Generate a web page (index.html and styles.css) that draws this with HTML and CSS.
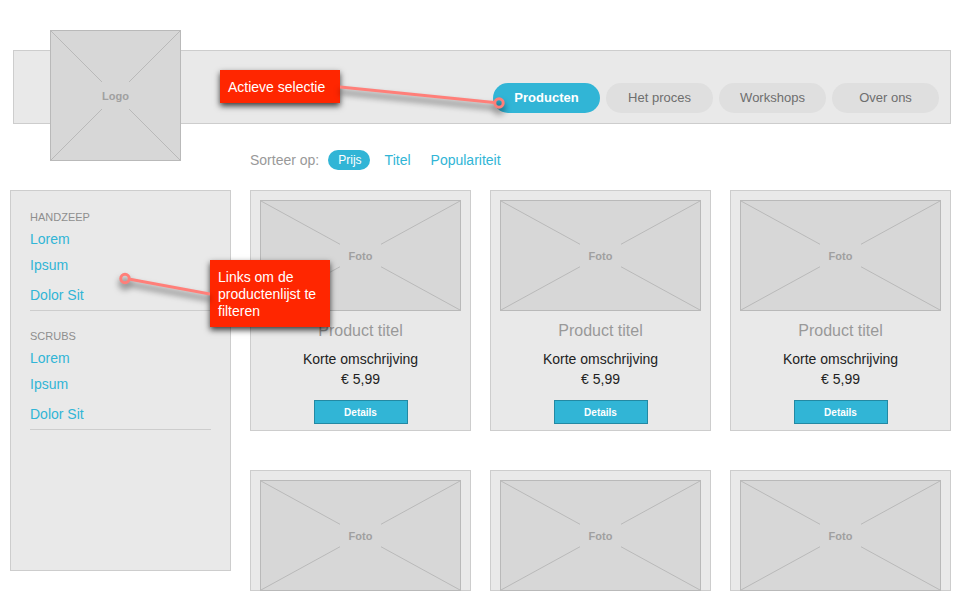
FILE: index.html
```html
<!DOCTYPE html>
<html lang="nl">
<head>
<meta charset="utf-8">
<meta name="viewport" content="width=device-width, initial-scale=1">
<title>Producten</title>
<link rel="stylesheet" href="styles.css">
</head>
<body>
<header class="header">
  <div class="placeholder logo">
    <svg class="cross" viewBox="0 0 100 100" preserveAspectRatio="none" aria-hidden="true"><path d="M0 0L100 100M100 0L0 100"/></svg>
    <span class="placeholder-label">Logo</span>
  </div>
  <nav class="nav">
    <a class="nav-link active" href="#">Producten</a>
    <a class="nav-link" href="#">Het proces</a>
    <a class="nav-link" href="#">Workshops</a>
    <a class="nav-link" href="#">Over ons</a>
  </nav>
</header>

<div class="sort">
  <span class="sort-label">Sorteer op:</span>
  <a class="sort-link active" href="#">Prijs</a>
  <a class="sort-link" href="#">Titel</a>
  <a class="sort-link" href="#">Populariteit</a>
</div>

<div class="layout">
  <aside class="sidebar">
    <section class="filter">
      <h2 class="filter-title">HANDZEEP</h2>
      <a class="filter-link" href="#">Lorem</a>
      <a class="filter-link" href="#">Ipsum</a>
      <a class="filter-link last" href="#">Dolor Sit</a>
    </section>
    <section class="filter">
      <h2 class="filter-title">SCRUBS</h2>
      <a class="filter-link" href="#">Lorem</a>
      <a class="filter-link" href="#">Ipsum</a>
      <a class="filter-link last" href="#">Dolor Sit</a>
    </section>
  </aside>

  <main class="products">
    <article class="card">
      <div class="placeholder photo">
        <svg class="cross" viewBox="0 0 100 100" preserveAspectRatio="none" aria-hidden="true"><path d="M0 0L100 100M100 0L0 100"/></svg>
        <span class="placeholder-label">Foto</span>
      </div>
      <h3 class="card-title">Product titel</h3>
      <p class="card-text">Korte omschrijving</p>
      <p class="card-text">€ 5,99</p>
      <button class="details" type="button">Details</button>
    </article>
    <article class="card">
      <div class="placeholder photo">
        <svg class="cross" viewBox="0 0 100 100" preserveAspectRatio="none" aria-hidden="true"><path d="M0 0L100 100M100 0L0 100"/></svg>
        <span class="placeholder-label">Foto</span>
      </div>
      <h3 class="card-title">Product titel</h3>
      <p class="card-text">Korte omschrijving</p>
      <p class="card-text">€ 5,99</p>
      <button class="details" type="button">Details</button>
    </article>
    <article class="card">
      <div class="placeholder photo">
        <svg class="cross" viewBox="0 0 100 100" preserveAspectRatio="none" aria-hidden="true"><path d="M0 0L100 100M100 0L0 100"/></svg>
        <span class="placeholder-label">Foto</span>
      </div>
      <h3 class="card-title">Product titel</h3>
      <p class="card-text">Korte omschrijving</p>
      <p class="card-text">€ 5,99</p>
      <button class="details" type="button">Details</button>
    </article>
    <article class="card card-cut">
      <div class="placeholder photo">
        <svg class="cross" viewBox="0 0 100 100" preserveAspectRatio="none" aria-hidden="true"><path d="M0 0L100 100M100 0L0 100"/></svg>
        <span class="placeholder-label">Foto</span>
      </div>
    </article>
    <article class="card card-cut">
      <div class="placeholder photo">
        <svg class="cross" viewBox="0 0 100 100" preserveAspectRatio="none" aria-hidden="true"><path d="M0 0L100 100M100 0L0 100"/></svg>
        <span class="placeholder-label">Foto</span>
      </div>
    </article>
    <article class="card card-cut">
      <div class="placeholder photo">
        <svg class="cross" viewBox="0 0 100 100" preserveAspectRatio="none" aria-hidden="true"><path d="M0 0L100 100M100 0L0 100"/></svg>
        <span class="placeholder-label">Foto</span>
      </div>
    </article>
  </main>
</div>

<div class="note note-nav">Actieve selectie</div>
<svg class="pointer pointer-nav" width="180" height="40" viewBox="0 0 180 40" aria-hidden="true"><path d="M0 7L154 22.5"/><circle cx="159" cy="23" r="4.2"/></svg>
<div class="note note-filter">Links om de productenlijst te filteren</div>
<svg class="pointer pointer-filter" width="100" height="50" viewBox="0 0 100 50" aria-hidden="true"><path d="M20 19.3L100 34"/><circle cx="15" cy="18.5" r="4.2"/></svg>
</body>
</html>
```

FILE: styles.css
```css
* {
  box-sizing: border-box;
}

body {
  position: relative;
  margin: 0;
  padding: 50px 9px 0 10px;
  background: #fff;
  font-family: "Liberation Sans", Arial, Helvetica, sans-serif;
  font-size: 14px;
  line-height: 20px;
  color: #222;
}

a {
  color: #31b5d6;
  text-decoration: none;
}

h2, h3, p {
  margin: 0;
  font-weight: normal;
}

.header {
  position: relative;
  margin-left: 3px;
  padding: 32px 11px 10px;
  background: #e9e9e9;
  border: 1px solid #cdcdcd;
}

.placeholder {
  display: flex;
  align-items: center;
  justify-content: center;
  background: #d7d7d7;
  border: 1px solid #b9b9b9;
}

.cross {
  position: absolute;
  inset: 0;
  width: 100%;
  height: 100%;
}

.cross path {
  fill: none;
  stroke: #b9b9b9;
  stroke-width: 1px;
  vector-effect: non-scaling-stroke;
}

.placeholder-label {
  position: relative;
  padding: 0 9px;
  background: #d7d7d7;
  font-size: 11px;
  font-weight: bold;
  line-height: 24px;
  color: #a0a0a0;
}

.logo {
  position: absolute;
  top: -21px;
  left: 36px;
  width: 131px;
  height: 131px;
}

.logo .placeholder-label {
  padding: 0;
  line-height: 28px;
}

.nav {
  display: flex;
  justify-content: flex-end;
  gap: 6px;
}

.nav-link {
  width: 107px;
  border-radius: 15px;
  background: #dfdfdf;
  font-size: 13px;
  line-height: 30px;
  text-align: center;
  color: #6e6e6e;
}

.nav-link.active {
  background: #31b5d6;
  font-weight: bold;
  color: #fff;
}

.sort {
  display: flex;
  align-items: center;
  margin: 26px 0 20px 240px;
}

.sort-label {
  margin-right: 9px;
  color: #999;
}

.sort-link {
  margin-right: 20px;
}

.sort-link.active {
  margin-right: 15px;
  padding: 0 8px 0 10px;
  border-radius: 10px;
  background: #31b5d6;
  font-size: 12px;
  color: #fff;
}

.layout {
  display: flex;
  align-items: flex-start;
  gap: 19px;
}

.sidebar {
  flex: 0 0 221px;
  min-height: 381px;
  padding: 18px 19px;
  background: #e9e9e9;
  border: 1px solid #cdcdcd;
}

.filter {
  display: flex;
  flex-direction: column;
  align-items: flex-start;
  margin-bottom: 17px;
  padding-bottom: 5px;
  border-bottom: 1px solid #cdcdcd;
}

.filter-title {
  margin-bottom: 4px;
  font-size: 11px;
  line-height: 16px;
  color: #8e8e8e;
}

.filter-link {
  margin-bottom: 6px;
}

.filter-link.last {
  margin-top: 4px;
  margin-bottom: 0;
}

.products {
  flex: 1;
  display: grid;
  grid-template-columns: repeat(3, 1fr);
  gap: 39px 19px;
}

.card {
  display: flex;
  flex-direction: column;
  align-items: center;
  padding: 9px 9px 6px;
  background: #e9e9e9;
  border: 1px solid #cdcdcd;
  text-align: center;
}

.card-cut {
  padding-bottom: 0;
}

.photo {
  position: relative;
  align-self: stretch;
  height: 111px;
}

.card-cut .photo {
  margin-bottom: -1px;
}

.card-title {
  margin: 10px 0 8px;
  font-size: 16px;
  color: #999;
}

.details {
  width: 94px;
  height: 24px;
  margin-top: 11px;
  padding: 0;
  border: 1px solid #2389a3;
  background: #31b5d6;
  font-family: inherit;
  font-size: 10px;
  font-weight: bold;
  color: #fff;
}

.note {
  position: absolute;
  width: 120px;
  padding: 9px 8px 7px;
  background: #ff2600;
  box-shadow: 0 3px 6px rgba(0, 0, 0, 0.75);
  line-height: 17px;
  color: #fff;
}

.note-nav {
  top: 70px;
  left: 220px;
}

.note-filter {
  top: 260px;
  left: 210px;
}

.pointer {
  position: absolute;
  fill: none;
  stroke: #ff7f79;
  stroke-width: 3px;
  filter: drop-shadow(0 5px 3px rgba(0, 0, 0, 0.6));
}

.pointer-nav {
  top: 80px;
  left: 340px;
}

.pointer-filter {
  top: 260px;
  left: 110px;
}
```
